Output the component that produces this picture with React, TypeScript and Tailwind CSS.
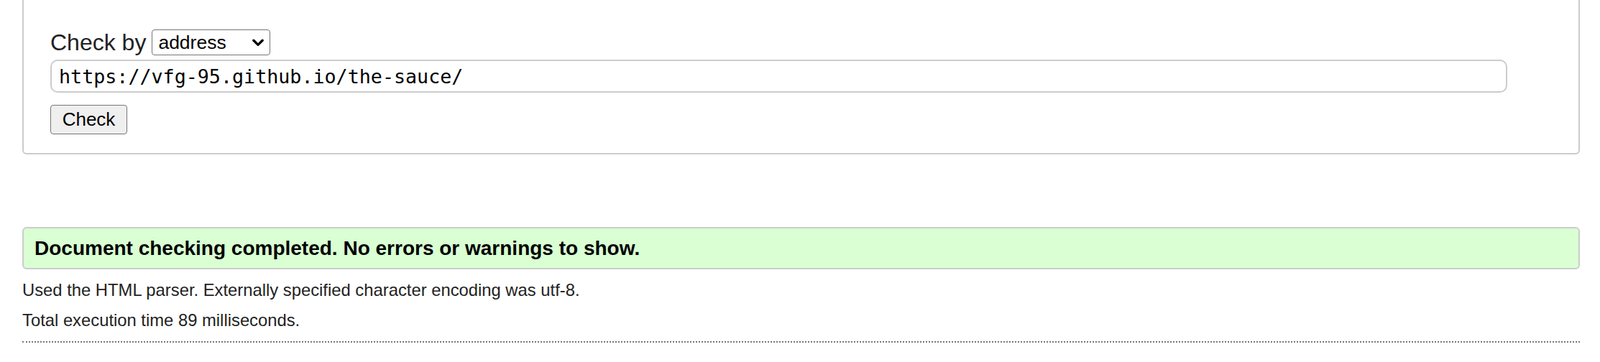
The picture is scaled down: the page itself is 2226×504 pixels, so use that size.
export default function App() {
  return (
    <div className="min-h-screen bg-white text-[#222] font-['Liberation_Sans',Arial,sans-serif]">
      {/* form box, top edge is scrolled off */}
      <div className="mx-[28px] ml-[31px] border-2 border-t-0 border-[#ccc] rounded-b-[6px] pl-[37px] pt-[41px] pb-[26px]">
        <div className="flex items-center h-[36px] gap-[8px]">
          <span className="text-[32px] leading-[36px]">Check by</span>
          <div className="relative">
            <select
              defaultValue="address"
              className="appearance-none h-[36px] w-[165px] border-[1.5px] border-[#767676] rounded-[4px] bg-white pl-[8px] text-[26.5px] leading-[32px] text-black outline-none"
            >
              <option value="address">address</option>
              <option value="upload">file upload</option>
              <option value="input">text input</option>
            </select>
            <svg
              viewBox="0 0 16 16"
              className="pointer-events-none absolute right-[8px] top-[9px] w-[18px] h-[18px]"
            >
              <path d="M2.5 5.5 L8 11 L13.5 5.5" fill="none" stroke="#000" strokeWidth="3" strokeLinecap="round" strokeLinejoin="round" />
            </svg>
          </div>
        </div>
        <input
          defaultValue="https://vfg-95.github.io/the-sauce/"
          className="block mt-[6px] h-[46px] w-[2027px] border-2 border-[#ccc] rounded-[10px] pl-[10px] text-[26.7px] text-black font-['DejaVu_Sans_Mono',monospace] outline-none"
        />
        <button className="block mt-[17px] h-[41px] w-[107px] border-[1.5px] border-[#767676] rounded-[4px] bg-[#efefef] text-[26px] text-black">
          Check
        </button>
      </div>

      <div className="mt-[101px] ml-[31px] mr-[28px] h-[59px] border-2 border-[#ccc] rounded-[6px] bg-[#d9ffd3] pl-[15px] text-[28px] leading-[55px] font-bold text-black">
        Document checking completed. No errors or warnings to show.
      </div>

      <div className="ml-[31px] mr-[28px] mt-[8px] text-[23.8px] leading-[42px]">
        <p>Used the HTML parser. Externally specified character encoding was utf-8.</p>
        <p>Total execution time 89 milliseconds.</p>
        <div className="mt-[8px] border-t-2 border-dotted border-[#777]" />
      </div>
    </div>
  );
}
